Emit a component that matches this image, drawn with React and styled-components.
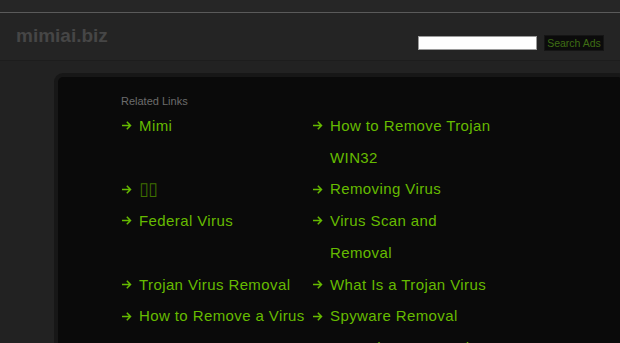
import React from "react";
import styled, { createGlobalStyle } from "styled-components";

const leftLinks = ["Mimi", null, "Federal Virus", "Trojan Virus Removal", "How to Remove a Virus", ""];
const rightLinks = [
  "How to Remove Trojan WIN32",
  "Removing Virus",
  "Virus Scan and Removal",
  "What Is a Trojan Virus",
  "Spyware Removal",
  "Free Virus Removal",
];

const Arrow = () => (
  <svg width="11" height="11" viewBox="0 0 11 11">
    <path d="M1 5.5h8.5M5.8 1.8L9.5 5.5 5.8 9.2" fill="none" stroke="#66bb00" strokeWidth="1.5" />
  </svg>
);

const LinkItem = ({ text }) => {
  if (text === "") return <Item />;
  return (
    <Item>
      <ArrowBox>
        <Arrow />
      </ArrowBox>
      {text === null ? <Tofu>▯▯</Tofu> : <LinkText>{text}</LinkText>}
    </Item>
  );
};

const App = () => {
  const rows = leftLinks.map((l, i) => [l, rightLinks[i]]);
  return (
    <>
      <GlobalStyle />
      <TopStrip />
      <Header>
        <Logo>mimiai.biz</Logo>
        <SearchForm>
          <SearchInput type="text" />
          <SearchButton>Search Ads</SearchButton>
        </SearchForm>
      </Header>
      <Body>
        <Panel>
          <Label>Related Links</Label>
          <LinkGrid>
            {rows.map(([l, r], i) => (
              <React.Fragment key={i}>
                <LinkItem text={l} />
                <LinkItem text={r} />
              </React.Fragment>
            ))}
          </LinkGrid>
        </Panel>
      </Body>
    </>
  );
};

const GlobalStyle = createGlobalStyle`
  html, body {
    margin: 0;
    background: #222222;
    font-family: "Liberation Sans", Arial, sans-serif;
    overflow: hidden;
  }
`;

const TopStrip = styled.div`
  height: 12px;
  background: #262626;
  border-bottom: 1px solid #5a5a5a;
`;

const Header = styled.div`
  height: 47px;
  background: #242424;
  border-bottom: 1px solid #1d1d1d;
  display: flex;
  align-items: center;
  justify-content: space-between;
  padding: 0 16px;
`;

const Logo = styled.div`
  font-size: 19px;
  font-weight: bold;
  color: #464646;
  margin-top: -2px;
`;

const SearchForm = styled.div`
  display: flex;
  align-items: center;
  gap: 7px;
  margin-top: 12px;
`;

const SearchInput = styled.input`
  width: 115px;
  height: 10px;
  border: 1px solid #9a9a9a;
  background: #ffffff;
  padding: 1px;
  outline: none;
`;

const SearchButton = styled.div`
  width: 58px;
  height: 14px;
  background: #0b0b0b;
  border: 1px solid #151515;
  color: #3f6d14;
  font-size: 10.5px;
  line-height: 14px;
  text-align: center;
`;

const Body = styled.div`
  padding-top: 12px;
`;

const Panel = styled.div`
  width: 502px;
  margin: 0 auto 0 54px;
  background: #0a0a0a;
  border: 4px solid #171717;
  border-radius: 9px;
  padding: 18px 0 0 63px;
  height: 400px;
`;

const Label = styled.div`
  font-size: 11px;
  line-height: 13px;
  color: #6c6c6c;
  margin-bottom: 2px;
`;

const LinkGrid = styled.div`
  display: grid;
  grid-template-columns: 191px 191px;
`;

const Item = styled.div`
  display: flex;
  align-items: flex-start;
`;

const ArrowBox = styled.span`
  width: 18px;
  height: 31.7px;
  display: flex;
  align-items: center;
`;

const LinkText = styled.span`
  width: 170px;
  font-size: 15px;
  line-height: 31.7px;
  letter-spacing: 0.4px;
  color: #66bb00;
`;

const Tofu = styled(LinkText)`
  font-family: "DejaVu Sans", sans-serif;
  font-size: 18px;
  letter-spacing: -1px;
  color: #3f7000;
`;

export default App;
